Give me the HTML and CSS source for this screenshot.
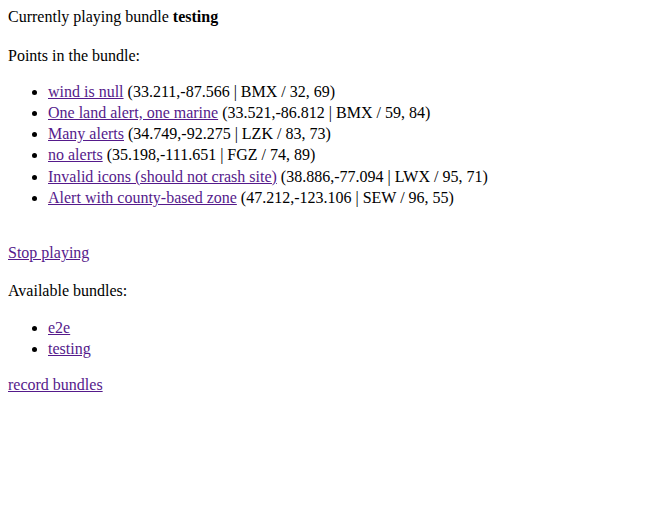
FILE: index.html
```html
<!DOCTYPE html>
<html>
<head>
<meta charset="utf-8">
<link rel="stylesheet" href="styles.css">
</head>
<body>
<div class="status">Currently playing bundle <b>testing</b></div>
<p class="points">Points in the bundle:</p>
<ul class="point-list">
<li><a href="#">wind is null</a> (33.211,-87.566 | BMX / 32, 69)</li>
<li><a href="#">One land alert, one marine</a> (33.521,-86.812 | BMX / 59, 84)</li>
<li><a href="#">Many alerts</a> (34.749,-92.275 | LZK / 83, 73)</li>
<li><a href="#">no alerts</a> (35.198,-111.651 | FGZ / 74, 89)</li>
<li><a href="#">Invalid icons (should not crash site)</a> (38.886,-77.094 | LWX / 95, 71)</li>
<li><a href="#">Alert with county-based zone</a> (47.212,-123.106 | SEW / 96, 55)</li>
</ul>
<div class="spacer"></div>
<a href="#">Stop playing</a>
<p class="avail">Available bundles:</p>
<ul class="bundles">
<li><a href="#">e2e</a></li>
<li><a href="#">testing</a></li>
</ul>
<a href="#">record bundles</a>
</body>
</html>
```
FILE: styles.css
```css
body {
  margin: 6px 8px 8px;
  font-family: "Liberation Serif", "Times New Roman", serif;
  font-size: 16px;
  line-height: 21.3px;
  color: #000;
  background: #fff;
}
a {
  color: #551a8b;
}
p {
  margin: 16px 0;
}
ul {
  margin: 16px 0;
  padding-left: 40px;
}
.points {
  margin: 18px 0 14px;
}
.point-list {
  margin-top: 14px;
}
.spacer {
  height: 18px;
}
.avail {
  margin-top: 16px;
}
.bundles {
  margin-bottom: 14px;
}
```
